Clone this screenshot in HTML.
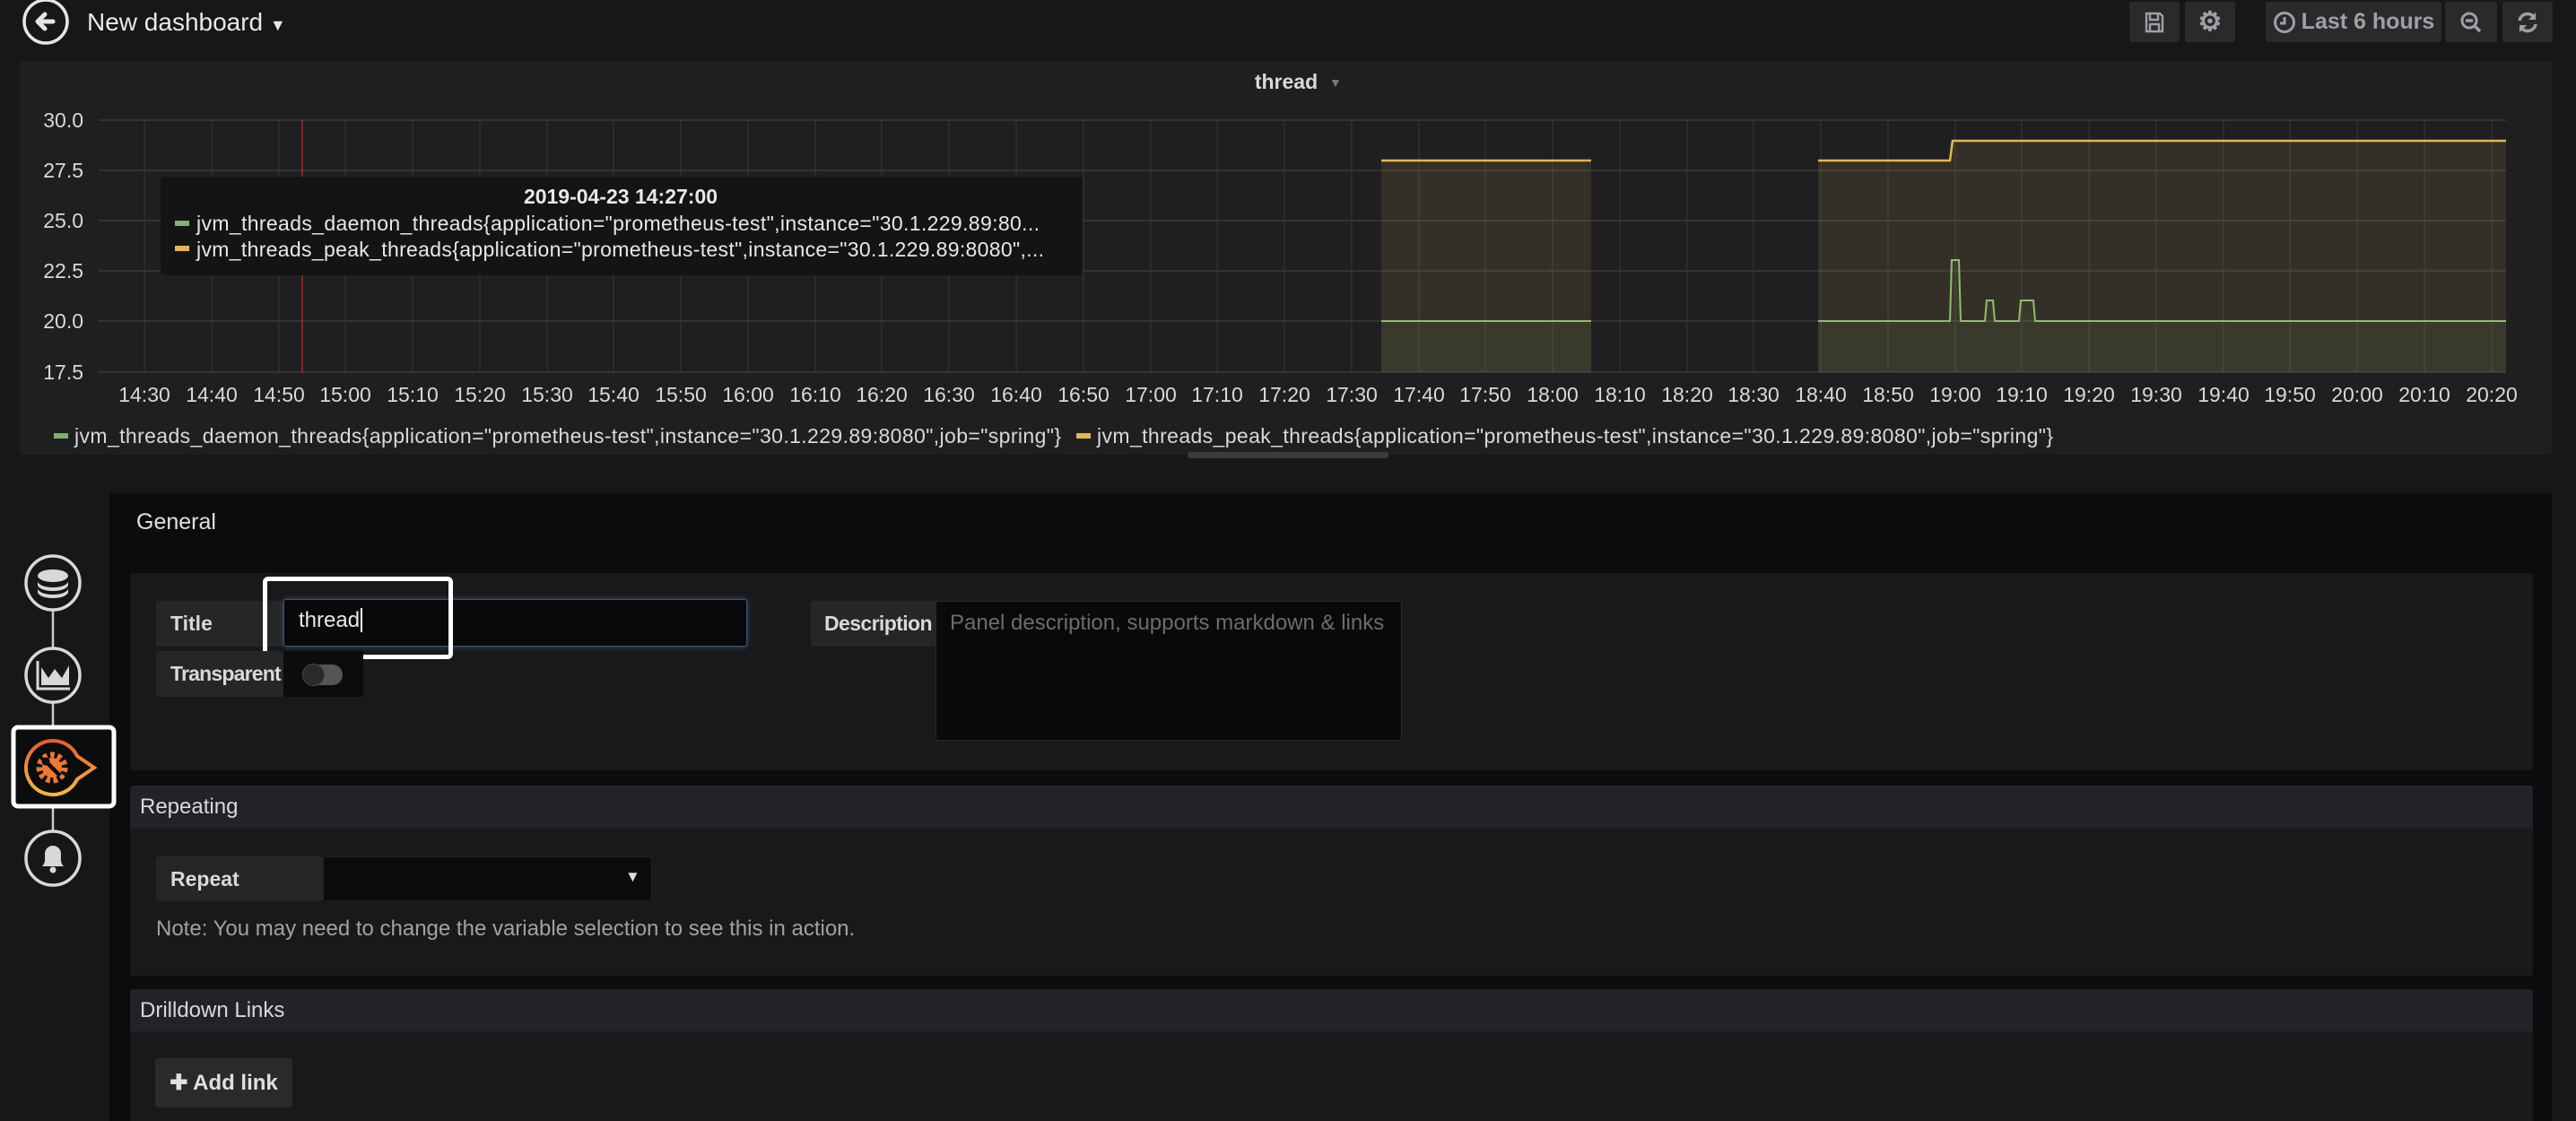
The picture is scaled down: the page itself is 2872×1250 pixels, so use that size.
<!DOCTYPE html>
<html><head><meta charset="utf-8"><style>
*{box-sizing:border-box;margin:0;padding:0}
body{width:2872px;height:1238px;background:#161719;font-family:"Liberation Sans",sans-serif;color:#d8d9da;position:relative;overflow:hidden}
.a{position:absolute}
.btn{position:absolute;top:2px;height:45px;background:#2a2a2d;border-radius:3px;color:#9fa0a3;font-weight:bold;font-size:25px;display:flex;align-items:center;justify-content:center}
.lbl{position:absolute;background:#252628;font-weight:bold;font-size:23px;color:#d8d9da;display:flex;align-items:center;padding-left:16px;border-radius:3px;white-space:nowrap;overflow:hidden}
.sec{position:absolute;left:145px;width:2679px;background:#19191b;border-radius:3px}
.hdr{position:absolute;left:145px;width:2679px;background:#222327;font-size:24px;color:#d8d9da;display:flex;align-items:center;padding-left:11px;border-radius:3px 3px 0 0}
</style></head><body>
<svg class="a" style="left:24px;top:-2px" width="56" height="56" viewBox="0 0 56 56"><circle cx="27" cy="26" r="24" fill="none" stroke="#e6e6e6" stroke-width="3.5"/><path d="M35 26H19M26 18l-8 8 8 8" fill="none" stroke="#e6e6e6" stroke-width="5" stroke-linecap="round" stroke-linejoin="round"/></svg>
<div class="a" style="left:97px;top:9px;font-size:28px;color:#e8e8e8">New dashboard <span style="font-size:18px">▼</span></div>
<div class="btn" style="left:2374px;width:56px"><svg width="22" height="24" viewBox="0 0 22 24"><path d="M2 2h15l3 3v17H2z M6 2v7h9V2 M6 14h10v8H6z" fill="none" stroke="#9fa0a3" stroke-width="2.4"/></svg></div>
<div class="btn" style="left:2436px;width:56px;font-size:30px">⚙</div>
<div class="btn" style="left:2526px;width:196px"><svg width="26" height="26" viewBox="0 0 26 26" style="margin-right:6px"><circle cx="13" cy="13" r="10.5" fill="none" stroke="#9fa0a3" stroke-width="3"/><path d="M13 7v7h-5" fill="none" stroke="#9fa0a3" stroke-width="3"/></svg>Last 6 hours</div>
<div class="btn" style="left:2726px;width:58px"><svg width="26" height="26" viewBox="0 0 26 26"><circle cx="11" cy="11" r="8" fill="none" stroke="#9fa0a3" stroke-width="3"/><path d="M7 11h8M17 17l6 6" stroke="#9fa0a3" stroke-width="3.5"/></svg></div>
<div class="btn" style="left:2790px;width:56px"><svg width="26" height="26" viewBox="0 0 26 26"><path d="M4 11a9 9 0 0 1 16-4M22 15a9 9 0 0 1-16 4" fill="none" stroke="#9fa0a3" stroke-width="3.5"/><path d="M22 2v8h-8zM4 24v-8h8z" fill="#9fa0a3"/></svg></div>

<div class="a" style="left:22px;top:68px;width:2823px;height:439px;background:#1f1f22;border-radius:3px"></div>
<svg class="a" style="left:0;top:0" width="2872" height="520" font-family="Liberation Sans, sans-serif">
<text x="1434" y="99" font-size="23" font-weight="bold" fill="#d8d9da" text-anchor="middle">thread</text>
<text x="1482" y="97" font-size="14" fill="#777">▼</text>
<g stroke="#3a3a3d" stroke-width="1.5">
<line x1="110" x2="2794" y1="134" y2="134"/><line x1="110" x2="2794" y1="190" y2="190"/><line x1="110" x2="2794" y1="246" y2="246"/><line x1="110" x2="2794" y1="302" y2="302"/><line x1="110" x2="2794" y1="358" y2="358"/><line x1="110" x2="2794" y1="415" y2="415"/>
</g>
<g stroke="#343437" stroke-width="1.2">
<line x1="161" x2="161" y1="134" y2="415"/><line x1="236" x2="236" y1="134" y2="415"/><line x1="311" x2="311" y1="134" y2="415"/><line x1="385" x2="385" y1="134" y2="415"/><line x1="460" x2="460" y1="134" y2="415"/><line x1="535" x2="535" y1="134" y2="415"/><line x1="610" x2="610" y1="134" y2="415"/><line x1="684" x2="684" y1="134" y2="415"/><line x1="759" x2="759" y1="134" y2="415"/><line x1="834" x2="834" y1="134" y2="415"/><line x1="909" x2="909" y1="134" y2="415"/><line x1="983" x2="983" y1="134" y2="415"/><line x1="1058" x2="1058" y1="134" y2="415"/><line x1="1133" x2="1133" y1="134" y2="415"/><line x1="1208" x2="1208" y1="134" y2="415"/><line x1="1283" x2="1283" y1="134" y2="415"/><line x1="1357" x2="1357" y1="134" y2="415"/><line x1="1432" x2="1432" y1="134" y2="415"/><line x1="1507" x2="1507" y1="134" y2="415"/><line x1="1582" x2="1582" y1="134" y2="415"/><line x1="1656" x2="1656" y1="134" y2="415"/><line x1="1731" x2="1731" y1="134" y2="415"/><line x1="1806" x2="1806" y1="134" y2="415"/><line x1="1881" x2="1881" y1="134" y2="415"/><line x1="1955" x2="1955" y1="134" y2="415"/><line x1="2030" x2="2030" y1="134" y2="415"/><line x1="2105" x2="2105" y1="134" y2="415"/><line x1="2180" x2="2180" y1="134" y2="415"/><line x1="2254" x2="2254" y1="134" y2="415"/><line x1="2329" x2="2329" y1="134" y2="415"/><line x1="2404" x2="2404" y1="134" y2="415"/><line x1="2479" x2="2479" y1="134" y2="415"/><line x1="2553" x2="2553" y1="134" y2="415"/><line x1="2628" x2="2628" y1="134" y2="415"/><line x1="2703" x2="2703" y1="134" y2="415"/><line x1="2778" x2="2778" y1="134" y2="415"/>
</g>
<path d="M1540 179H1774V415H1540Z" fill="#c9a64a" fill-opacity="0.13"/>
<path d="M2027 179H2174V157H2794V415H2027Z" fill="#c9a64a" fill-opacity="0.13"/>
<path d="M1540 358H1774V415H1540Z" fill="#7eb26d" fill-opacity="0.08"/>
<path d="M2027 358H2174V290H2185V358H2213V335H2224V358H2251V335H2269V358H2794V415H2027Z" fill="#7eb26d" fill-opacity="0.08"/>
<path d="M1540 179H1774M2027 179H2174L2177 157H2794" fill="none" stroke="#e0b84f" stroke-width="2.5"/>
<path d="M1540 358H1774M2027 358H2174L2176 290H2184L2186 358H2213L2215 335H2222L2224 358H2251L2253 335H2267L2269 358H2794" fill="none" stroke="#8fbd6d" stroke-width="2"/>
<line x1="337" x2="337" y1="134" y2="415" stroke="#a52a2a" stroke-width="1.5"/>
<g font-size="23" fill="#d8d9da" text-anchor="end">
<text x="93" y="142">30.0</text><text x="93" y="198">27.5</text><text x="93" y="254">25.0</text><text x="93" y="310">22.5</text><text x="93" y="366">20.0</text><text x="93" y="423">17.5</text>
</g>
<g font-size="23" fill="#d8d9da" text-anchor="middle">
<text x="161" y="448">14:30</text><text x="236" y="448">14:40</text><text x="311" y="448">14:50</text><text x="385" y="448">15:00</text><text x="460" y="448">15:10</text><text x="535" y="448">15:20</text><text x="610" y="448">15:30</text><text x="684" y="448">15:40</text><text x="759" y="448">15:50</text><text x="834" y="448">16:00</text><text x="909" y="448">16:10</text><text x="983" y="448">16:20</text><text x="1058" y="448">16:30</text><text x="1133" y="448">16:40</text><text x="1208" y="448">16:50</text><text x="1283" y="448">17:00</text><text x="1357" y="448">17:10</text><text x="1432" y="448">17:20</text><text x="1507" y="448">17:30</text><text x="1582" y="448">17:40</text><text x="1656" y="448">17:50</text><text x="1731" y="448">18:00</text><text x="1806" y="448">18:10</text><text x="1881" y="448">18:20</text><text x="1955" y="448">18:30</text><text x="2030" y="448">18:40</text><text x="2105" y="448">18:50</text><text x="2180" y="448">19:00</text><text x="2254" y="448">19:10</text><text x="2329" y="448">19:20</text><text x="2404" y="448">19:30</text><text x="2479" y="448">19:40</text><text x="2553" y="448">19:50</text><text x="2628" y="448">20:00</text><text x="2703" y="448">20:10</text><text x="2778" y="448">20:20</text>
</g>
<rect x="179" y="197" width="1028" height="110" rx="4" fill="#141414"/>
<text x="692" y="227" font-size="23" font-weight="bold" fill="#e8e8e8" text-anchor="middle">2019-04-23 14:27:00</text>
<rect x="195" y="246" width="16" height="6" fill="#7eb26d"/>
<text x="219" y="257" font-size="23" fill="#e8e8e8" textLength="940">jvm_threads_daemon_threads{application="prometheus-test",instance="30.1.229.89:80...</text>
<rect x="195" y="274" width="16" height="6" fill="#e0b84f"/>
<text x="219" y="286" font-size="23" fill="#e8e8e8" textLength="945">jvm_threads_peak_threads{application="prometheus-test",instance="30.1.229.89:8080",...</text>
<rect x="60" y="483" width="16" height="6" fill="#7eb26d"/>
<text x="83" y="494" font-size="23" fill="#d8d9da" textLength="1100">jvm_threads_daemon_threads{application="prometheus-test",instance="30.1.229.89:8080",job="spring"}</text>
<rect x="1200" y="483" width="16" height="6" fill="#e0b84f"/>
<text x="1223" y="494" font-size="23" fill="#d8d9da" textLength="1066">jvm_threads_peak_threads{application="prometheus-test",instance="30.1.229.89:8080",job="spring"}</text>
<rect x="1324" y="504" width="224" height="7" rx="3" fill="#3a3a3d"/>
</svg>

<div class="a" style="left:122px;top:550px;width:2723px;height:700px;background:#0b0c0e"></div>
<div class="a" style="left:152px;top:568px;font-size:25px;color:#e0e0e0">General</div>
<div class="sec" style="top:639px;height:220px"></div>
<div class="lbl" style="left:174px;top:670px;width:142px;height:51px">Title</div>
<div class="a" style="left:316px;top:668px;width:517px;height:53px;background:#09090b;border:1px solid #3d5475;box-shadow:0 0 6px #3d5475;border-radius:3px"></div>
<div class="a" style="left:333px;top:678px;font-size:24px;color:#e8e8e8">thread<span style="border-left:2px solid #fff;margin-left:1px"></span></div>
<div class="a" style="left:293px;top:643px;width:212px;height:92px;border:5px solid #fff;border-radius:6px"></div>
<div class="lbl" style="left:174px;top:726px;width:142px;height:51px;padding-left:16px;letter-spacing:-0.8px">Transparent</div>
<div class="a" style="left:316px;top:726px;width:89px;height:51px;background:#0b0c0e"></div>
<div class="a" style="left:338px;top:741px;width:44px;height:23px;background:#555;border-radius:12px"></div>
<div class="a" style="left:337px;top:740px;width:25px;height:25px;background:#2a2a2a;border-radius:50%;border:1px solid #444"></div>
<div class="lbl" style="left:904px;top:670px;width:140px;height:51px;padding-left:15px;letter-spacing:-0.6px">Description</div>
<div class="a" style="left:1043px;top:670px;width:520px;height:156px;background:#09090b;border:1px solid #2a2a2e;border-radius:3px;padding:10px 15px;font-size:24px;color:#6b6c70">Panel description, supports markdown &amp; links</div>

<div class="hdr" style="top:876px;height:48px">Repeating</div>
<div class="sec" style="top:924px;height:164px;border-radius:0 0 3px 3px"></div>
<div class="lbl" style="left:174px;top:955px;width:186px;height:50px">Repeat</div>
<div class="a" style="left:360px;top:955px;width:367px;height:50px;background:#0b0c0e;border:1px solid #222;border-radius:3px"></div>
<div class="a" style="left:697px;top:968px;font-size:17px;color:#ddd">▼</div>
<div class="a" style="left:174px;top:1022px;font-size:24px;color:#a0a1a4">Note: You may need to change the variable selection to see this in action.</div>

<div class="hdr" style="top:1103px;height:47px">Drilldown Links</div>
<div class="sec" style="top:1150px;height:100px;border-radius:0"></div>
<div class="a" style="left:173px;top:1180px;width:153px;height:55px;background:#2a2a2d;border-radius:3px;font-size:24px;font-weight:bold;color:#e0e0e0;display:flex;align-items:center;justify-content:center">✚ Add link</div>

<svg class="a" style="left:0;top:600px" width="140" height="400" viewBox="0 0 140 400">
<defs><linearGradient id="og" x1="0" y1="0" x2="0" y2="1"><stop offset="0" stop-color="#eb5d2b"/><stop offset="1" stop-color="#f7b93a"/></linearGradient></defs>
<line x1="59" y1="80" x2="59" y2="326" stroke="#ccc" stroke-width="2.5"/>
<circle cx="59" cy="50" r="30" fill="#161719" stroke="#d8d8d8" stroke-width="3.5"/>
<ellipse cx="59" cy="42" rx="17" ry="7" fill="#d8d8d8"/><path d="M42 48a17 7 0 0 0 34 0v4a17 7 0 0 1-34 0zM42 56a17 7 0 0 0 34 0v4a17 7 0 0 1-34 0z" fill="#d8d8d8"/>
<circle cx="59" cy="153" r="30" fill="#161719" stroke="#d8d8d8" stroke-width="3.5"/>
<path d="M42 137v31h36" fill="none" stroke="#d8d8d8" stroke-width="3"/><path d="M46 164v-20l8 12 7-10 8 10 8-14v22z" fill="#d8d8d8"/>
<rect x="15" y="211" width="112" height="88" rx="5" fill="#0b0c0e" stroke="#fff" stroke-width="5"/>
<path d="M59 226a30 30 0 0 1 27 17l19 13-19 13a30 30 0 1 1-27-43z" fill="#0b0c0e" stroke="url(#og)" stroke-width="4"/>
<circle cx="58" cy="256" r="14" fill="none" stroke="#ee7a30" stroke-width="7" stroke-dasharray="4.5 3.5"/>
<circle cx="58" cy="256" r="11" fill="#ee7a30"/>
<path d="M51 249l16 16" stroke="#0b0c0e" stroke-width="4.5"/><circle cx="51" cy="249" r="4.5" fill="#0b0c0e"/>
<circle cx="59" cy="357" r="30" fill="#161719" stroke="#d8d8d8" stroke-width="3.5"/>
<path d="M47 366c4-4 3-8 3-14a9 9 0 0 1 18 0c0 6-1 10 3 14z" fill="#d8d8d8"/><circle cx="59" cy="370" r="3.5" fill="#d8d8d8"/>
</svg>
</body></html>
